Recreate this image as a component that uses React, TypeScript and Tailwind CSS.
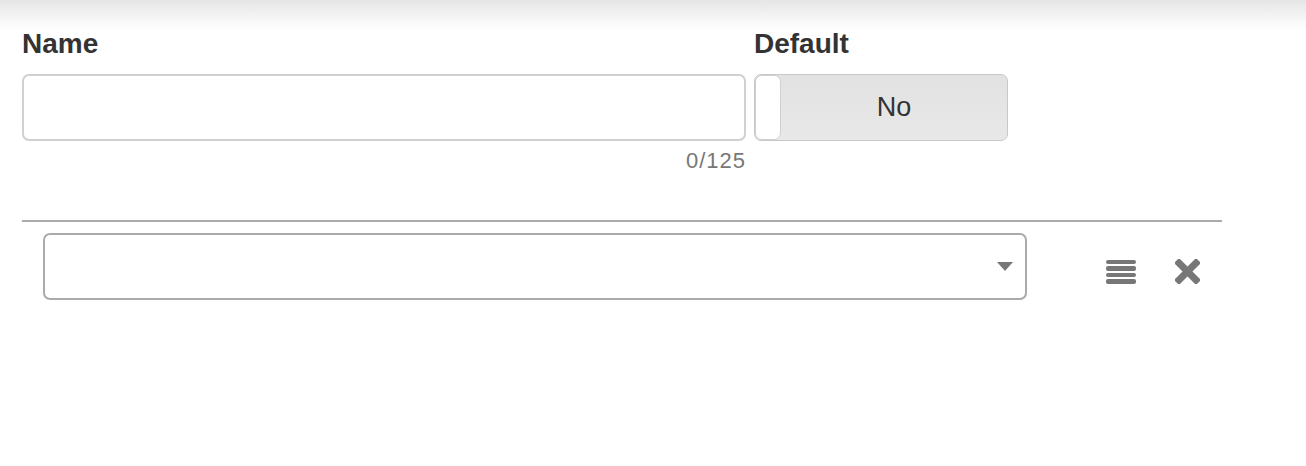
const font = { fontFamily: '"Liberation Sans", Arial, sans-serif' };

const App = () => {
  return (
    <div
      className="w-[1306px] h-[466px] bg-[linear-gradient(to_bottom,#e6e6e6_0px,#ffffff_30px)] text-[#333]"
      style={font}
    >
      <div className="flex gap-[8px] pl-[22px] pt-[26px]">
        <div className="w-[724px] flex flex-col">
          <label className="text-[28px] leading-[36px] font-bold mb-[12px]">Name</label>
          <input
            type="text"
            className="h-[67px] w-full rounded-[7px] border-2 border-[#d0d0d0] bg-white px-3 outline-none"
          />
          <div className="self-end text-[22px] leading-[28px] text-[#777] mt-[6px] tracking-[1px]">0/125</div>
        </div>
        <div className="w-[254px] flex flex-col">
          <label className="text-[28px] leading-[36px] font-bold mb-[12px]">Default</label>
          <div className="h-[67px] flex rounded-[7px] border border-[#c8c8c8] bg-[linear-gradient(to_bottom,#e2e2e2,#e8e8e8)] overflow-hidden">
            <div className="w-[26px] h-full bg-white rounded-[7px] border border-[#cfcfcf]" />
            <div className="flex-1 flex items-center justify-center text-[27px] text-[#333]">No</div>
          </div>
        </div>
      </div>

      <div className="ml-[22px] w-[1200px] mt-[45px] h-[2px] bg-[#ababab]" />

      <div className="flex items-center pl-[43px] mt-[11px]">
        <div className="w-[984px] h-[67px] rounded-[7px] border-2 border-[#aaaaaa] flex items-center justify-end pr-[12px]">
          <svg width="16" height="9" viewBox="0 0 16 9">
            <polygon points="0,0 16,0 8,9" fill="#777" />
          </svg>
        </div>
        <div className="ml-[79px] mt-[10px] flex flex-col gap-[2px] w-[30px]">
          <div className="h-[4.5px] rounded-[2px] bg-[#777]" />
          <div className="h-[4.5px] rounded-[2px] bg-[#777]" />
          <div className="h-[4.5px] rounded-[2px] bg-[#777]" />
          <div className="h-[4.5px] rounded-[2px] bg-[#777]" />
        </div>
        <svg className="ml-[39px] mt-[10px]" width="25" height="25" viewBox="0 0 25 25">
          <path d="M4 4 L21 21 M21 4 L4 21" stroke="#777" strokeWidth="7" strokeLinecap="square" />
        </svg>
      </div>
    </div>
  );
};

export default App;
